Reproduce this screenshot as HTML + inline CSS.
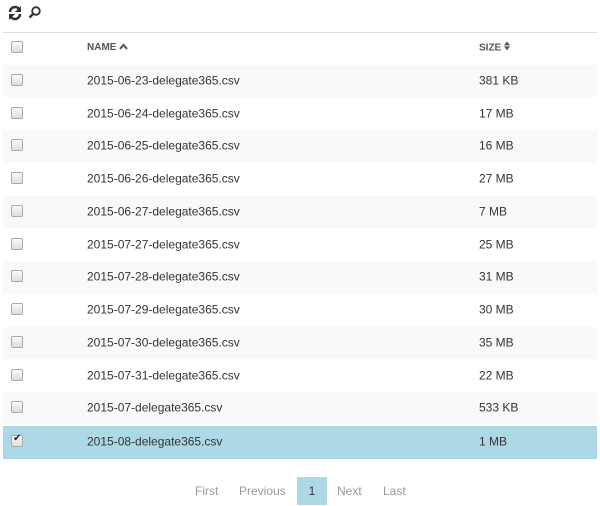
<!DOCTYPE html>
<html><head><style>
body{margin:0;width:600px;height:506px;background:#fff;font-family:"Liberation Sans",Arial,sans-serif;font-size:12px;color:#333;position:relative;overflow:hidden}
.tb{position:absolute;left:8px;top:5px}
.hline{position:absolute;left:3px;right:3px;top:32px;height:1px;background:#ddd}
.row{position:absolute;left:3px;width:594px;height:32.75px}
.row.s{background:#f9f9f9}
.row.sel{background:#add8e6}
.cb{position:absolute;left:8px;top:50%;margin-top:-7px;width:10px;height:10px;border:1px solid #aaa;border-radius:2px;background:linear-gradient(#fafafa,#ddd)}
.n{position:absolute;left:84px;top:50%;transform:translateY(-55%)}
.z{position:absolute;left:476px;top:50%;transform:translateY(-55%)}
.h{font-size:10px;font-weight:bold;color:#555}
.pg{position:absolute;top:477px;height:28px;line-height:28px;color:#999;font-size:12px}
</style></head><body>
<div class="tb"><svg width="40" height="16" viewBox="0 0 40 16">
<path d="M2 7a5 5 0 0 1 9-3" fill="none" stroke="#333" stroke-width="2.6"/><path d="M13 1v6h-6z" fill="#333"/>
<path d="M12 9a5 5 0 0 1-9 3" fill="none" stroke="#333" stroke-width="2.6"/><path d="M1 15v-6h6z" fill="#333"/>
<circle cx="28" cy="6" r="3.8" fill="none" stroke="#333" stroke-width="1.8"/><path d="M25.5 8.5l-4 4" stroke="#333" stroke-width="2.4"/>
</svg></div>
<div class="hline"></div>
<div class="row" style="top:32px"><div class="cb"></div><div class="n h">NAME <svg width="9" height="7" viewBox="0 0 9 7"><path d="M1 6l3.5-4 3.5 4" fill="none" stroke="#555" stroke-width="2"/></svg></div><div class="z h">SIZE <svg width="6" height="9" viewBox="0 0 6 9"><path d="M0 4h6L3 0zM0 5h6L3 9z" fill="#555"/></svg></div></div>
<div class="row s" style="top:64.5px"><div class="cb"></div><div class="n">2015-06-23-delegate365.csv</div><div class="z">381 KB</div></div>
<div class="row" style="top:97.25px"><div class="cb"></div><div class="n">2015-06-24-delegate365.csv</div><div class="z">17 MB</div></div>
<div class="row s" style="top:130px"><div class="cb"></div><div class="n">2015-06-25-delegate365.csv</div><div class="z">16 MB</div></div>
<div class="row" style="top:162.75px"><div class="cb"></div><div class="n">2015-06-26-delegate365.csv</div><div class="z">27 MB</div></div>
<div class="row s" style="top:195.5px"><div class="cb"></div><div class="n">2015-06-27-delegate365.csv</div><div class="z">7 MB</div></div>
<div class="row" style="top:228.25px"><div class="cb"></div><div class="n">2015-07-27-delegate365.csv</div><div class="z">25 MB</div></div>
<div class="row s" style="top:261px"><div class="cb"></div><div class="n">2015-07-28-delegate365.csv</div><div class="z">31 MB</div></div>
<div class="row" style="top:293.75px"><div class="cb"></div><div class="n">2015-07-29-delegate365.csv</div><div class="z">30 MB</div></div>
<div class="row s" style="top:326.5px"><div class="cb"></div><div class="n">2015-07-30-delegate365.csv</div><div class="z">35 MB</div></div>
<div class="row" style="top:359.25px"><div class="cb"></div><div class="n">2015-07-31-delegate365.csv</div><div class="z">22 MB</div></div>
<div class="row s" style="top:392px"><div class="cb"></div><div class="n">2015-07-delegate365.csv</div><div class="z">533 KB</div></div>
<div class="row sel" style="top:425.75px"><div class="cb"><span style="position:absolute;left:1px;top:-3px;font-size:10px;color:#222">&#10004;</span></div><div class="n">2015-08-delegate365.csv</div><div class="z">1 MB</div></div>
<div class="pg" style="left:195px">First</div>
<div class="pg" style="left:239px">Previous</div>
<div class="pg" style="left:297px;width:30px;background:#add8e6;color:#333;text-align:center">1</div>
<div class="pg" style="left:337px">Next</div>
<div class="pg" style="left:383px">Last</div>
</body></html>
